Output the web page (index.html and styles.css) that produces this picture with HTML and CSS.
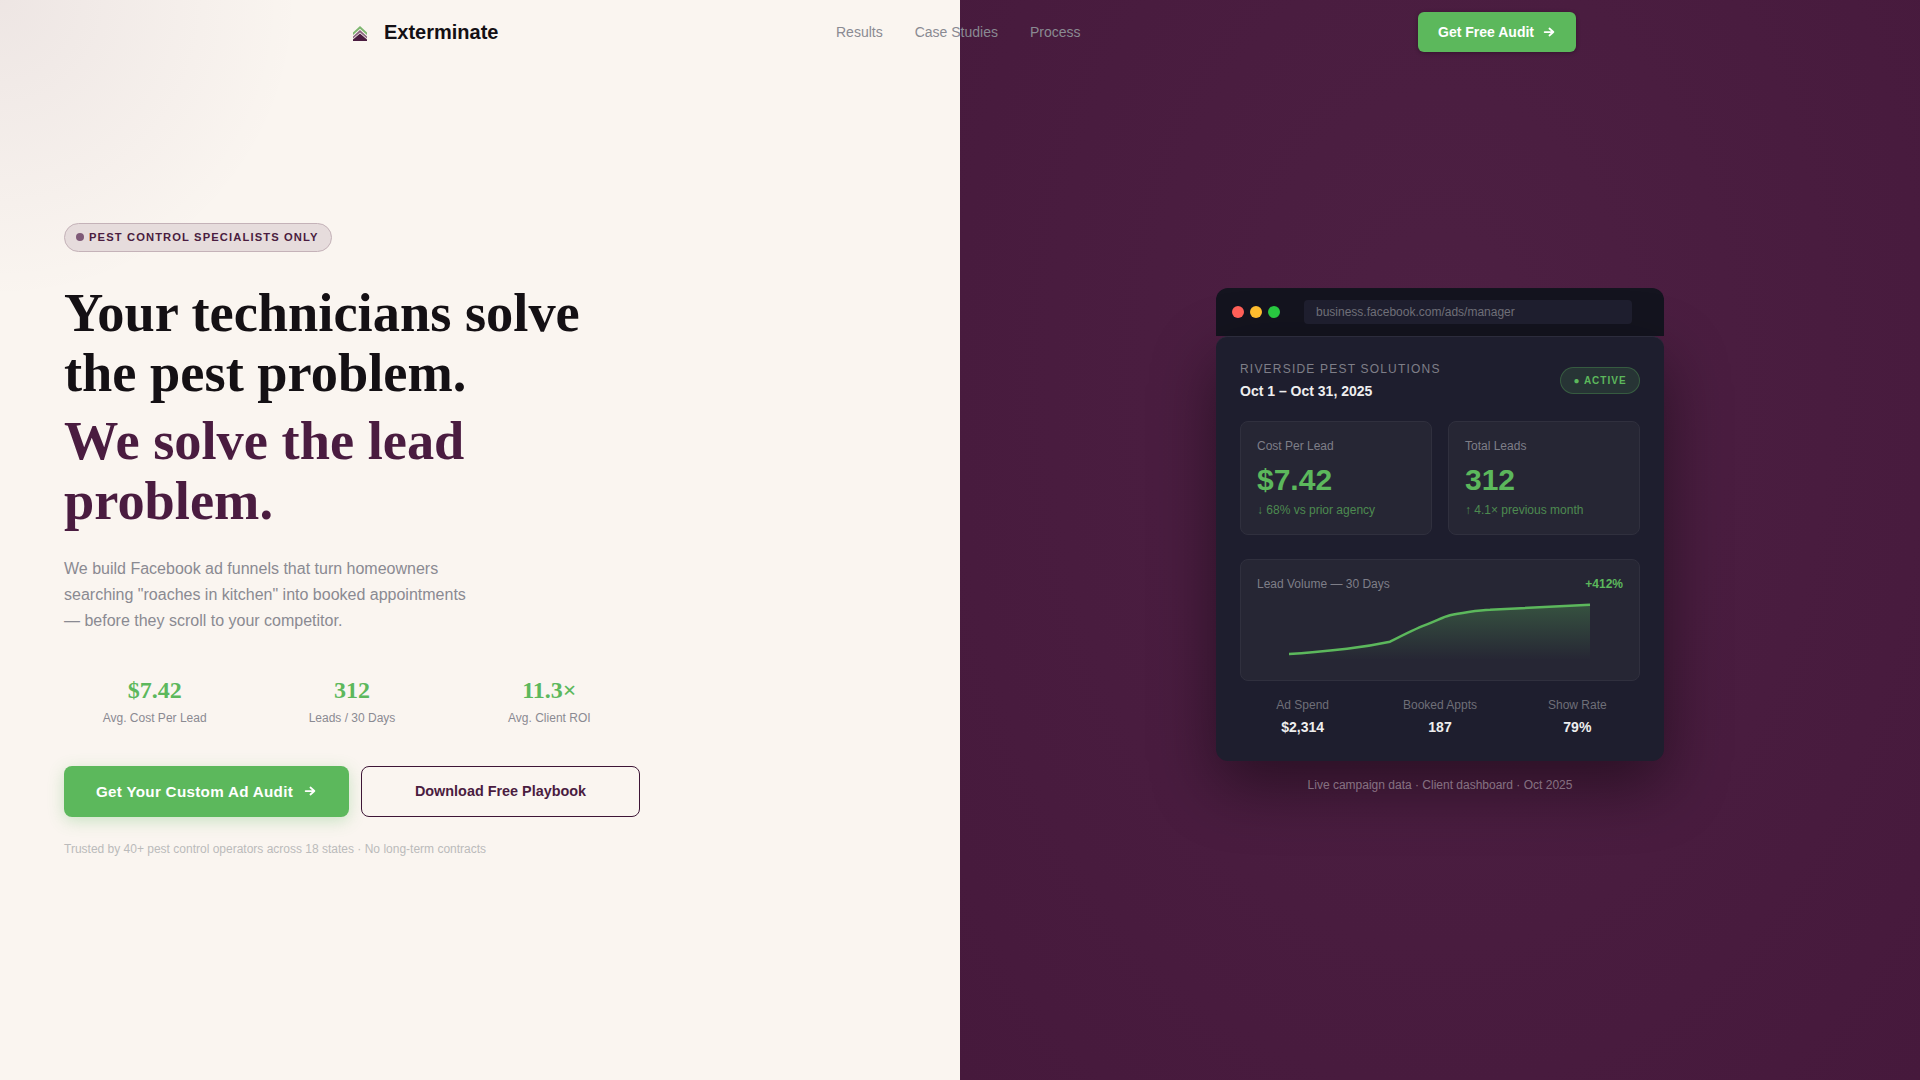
FILE: index.html
```html
<!DOCTYPE html>
<html lang="en">
<head>
    <meta charset="UTF-8">
    <meta name="viewport" content="width=device-width, initial-scale=1.0">
    <title>Exterminate - Facebook Ads for Pest Control</title>
    <link rel="stylesheet" href="styles.css">
</head>
<body>
<header class="nav">
    <div class="nav-inner">
        <a class="logo" href="#">
            <svg class="logo-icon" viewBox="0 0 32 32" aria-hidden="true">
                <path d="M16 10 L23 16.5 V19 L16 12.8 L9 19 V16.5 Z" fill="#7db66f"/>
                <path d="M16 14 L23 20.5 V22.5 L16 16.5 L9 22.5 V20.5 Z" fill="#8a6480"/>
                <path d="M16 17.5 L23 23.5 V25 H9 V23.5 Z" fill="#4a1c40"/>
            </svg>
            <span class="logo-text">Exterminate</span>
        </a>
        <nav class="nav-links">
            <a href="#">Results</a>
            <a href="#">Case Studies</a>
            <a href="#">Process</a>
        </nav>
        <a class="nav-cta" href="#">Get Free Audit
            <svg class="arrow" viewBox="0 0 16 16" aria-hidden="true"><path d="M3 8h10M8.5 4 13 8l-4.5 4"/></svg>
        </a>
    </div>
</header>

<main class="split">
    <section class="hero">
        <div class="hero-inner">
            <div class="badge"><span class="badge-dot"></span>PEST CONTROL SPECIALISTS ONLY</div>
            <h1>Your technicians solve the pest problem.<span class="h1-accent">We solve the lead problem.</span></h1>
            <p class="lead">We build Facebook ad funnels that turn homeowners searching "roaches in kitchen" into booked appointments — before they scroll to your competitor.</p>
            <div class="stats">
                <div class="stat"><div class="stat-value">$7.42</div><div class="stat-label">Avg. Cost Per Lead</div></div>
                <div class="stat"><div class="stat-value">312</div><div class="stat-label">Leads / 30 Days</div></div>
                <div class="stat"><div class="stat-value">11.3×</div><div class="stat-label">Avg. Client ROI</div></div>
            </div>
            <div class="actions">
                <a class="btn btn-primary" href="#">Get Your Custom Ad Audit
                    <svg class="arrow" viewBox="0 0 16 16" aria-hidden="true"><path d="M3 8h10M8.5 4 13 8l-4.5 4"/></svg>
                </a>
                <a class="btn btn-outline" href="#">Download Free Playbook</a>
            </div>
            <p class="trust">Trusted by 40+ pest control operators across 18 states · No long-term contracts</p>
        </div>
    </section>

    <section class="showcase">
        <div class="browser">
            <div class="browser-bar">
                <div class="dots">
                    <span class="dot dot-red"></span>
                    <span class="dot dot-yellow"></span>
                    <span class="dot dot-green"></span>
                </div>
                <div class="url">business.facebook.com/ads/manager</div>
            </div>
            <div class="dash">
                <div class="dash-head">
                    <div>
                        <div class="client">RIVERSIDE PEST SOLUTIONS</div>
                        <div class="period">Oct 1 – Oct 31, 2025</div>
                    </div>
                    <div class="status">● ACTIVE</div>
                </div>
                <div class="metrics">
                    <div class="metric">
                        <div class="metric-label">Cost Per Lead</div>
                        <div class="metric-value">$7.42</div>
                        <div class="metric-sub">↓ 68% vs prior agency</div>
                    </div>
                    <div class="metric">
                        <div class="metric-label">Total Leads</div>
                        <div class="metric-value">312</div>
                        <div class="metric-sub">↑ 4.1× previous month</div>
                    </div>
                </div>
                <div class="chart">
                    <div class="chart-head">
                        <span>Lead Volume — 30 Days</span>
                        <span class="chart-delta">+412%</span>
                    </div>
                    <svg class="chart-svg" viewBox="0 0 366 64" aria-hidden="true">
                        <defs>
                            <linearGradient id="chartFill" x1="0" y1="0" x2="0" y2="1">
                                <stop offset="0" stop-color="#5cb85c" stop-opacity="0.3"/>
                                <stop offset="1" stop-color="#5cb85c" stop-opacity="0"/>
                            </linearGradient>
                        </defs>
                        <path d="M32 54 C50 53 70 51 90 48.7 S120 44.5 133 41.7 C142 37 160 28 170 24.3 S186 17 193 15.3 S222 10 233 9.7 L333 4.7 V60 H32 Z" fill="url(#chartFill)"/>
                        <path d="M32 54 C50 53 70 51 90 48.7 S120 44.5 133 41.7 C142 37 160 28 170 24.3 S186 17 193 15.3 S222 10 233 9.7 L333 4.7" fill="none" stroke="#5cb85c" stroke-width="2.5" stroke-linejoin="round"/>
                    </svg>
                </div>
                <div class="totals">
                    <div class="total"><div class="total-label">Ad Spend</div><div class="total-value">$2,314</div></div>
                    <div class="total"><div class="total-label">Booked Appts</div><div class="total-value">187</div></div>
                    <div class="total"><div class="total-label">Show Rate</div><div class="total-value">79%</div></div>
                </div>
            </div>
            <p class="caption">Live campaign data · Client dashboard · Oct 2025</p>
        </div>
    </section>
</main>
</body>
</html>
```

FILE: styles.css
```css
* {
    box-sizing: border-box;
}

body {
    margin: 0;
    font-family: "Liberation Sans", Arial, sans-serif;
    color: #141014;
    background: #faf5f0;
}

a {
    text-decoration: none;
    color: inherit;
}

.arrow {
    width: 14px;
    height: 14px;
    fill: none;
    stroke: currentColor;
    stroke-width: 2;
    stroke-linecap: round;
    stroke-linejoin: round;
}

/* nav */
.nav {
    position: absolute;
    top: 0;
    left: 0;
    right: 0;
    z-index: 2;
}

.nav-inner {
    max-width: 1280px;
    height: 64px;
    margin: 0 auto;
    padding: 0 24px;
    display: flex;
    align-items: center;
    justify-content: space-between;
}

.logo {
    display: flex;
    align-items: center;
    gap: 8px;
}

.logo-icon {
    width: 32px;
    height: 32px;
}

.logo-text {
    font-size: 20px;
    font-weight: 700;
    color: #141014;
}

.nav-links {
    display: flex;
    gap: 32px;
    font-size: 14px;
    color: #8a8a92;
}

.nav-cta {
    display: flex;
    align-items: center;
    gap: 8px;
    height: 40px;
    padding: 0 20px;
    font-size: 14px;
    font-weight: 700;
    color: #fff;
    background: #5cb85c;
    border-radius: 6px;
    box-shadow: 0 1px 4px rgba(0, 0, 0, 0.3);
}

/* split */
.split {
    display: grid;
    grid-template-columns: 1fr 1fr;
    min-height: 1080px;
}

.hero {
    display: flex;
    align-items: center;
    padding: 0 64px;
    background: radial-gradient(circle at 0 0, rgba(74, 28, 64, 0.07), rgba(74, 28, 64, 0) 300px), #faf5f0;
}

.hero-inner {
    width: 576px;
}

.badge {
    display: inline-flex;
    align-items: center;
    gap: 5px;
    height: 29px;
    padding: 0 12px 0 11px;
    font-size: 11.2px;
    font-weight: 700;
    letter-spacing: 1.12px;
    color: #4a1c40;
    background: #e6dcdc;
    border: 1px solid #c4b2b8;
    border-radius: 15px;
}

.badge-dot {
    width: 8px;
    height: 8px;
    border-radius: 50%;
    background: #7f5a78;
}

h1 {
    margin: 31px 0 0;
    font-family: "Liberation Serif", "Times New Roman", serif;
    font-size: 54.4px;
    font-weight: 700;
    line-height: 60.5px;
    color: #141014;
}

.h1-accent {
    display: block;
    margin-top: 7px;
    color: #4a1c40;
}

.lead {
    margin: 24px 0 0;
    max-width: 420px;
    font-size: 16px;
    line-height: 26px;
    color: #8a8a92;
}

.stats {
    display: grid;
    grid-template-columns: repeat(3, 1fr);
    gap: 16px;
    margin-top: 40px;
    text-align: center;
}

.stat-value {
    font-family: "Liberation Serif", "Times New Roman", serif;
    font-size: 24px;
    font-weight: 700;
    line-height: 32px;
    color: #5cb85c;
}

.stat-label {
    margin-top: 4px;
    font-size: 12px;
    line-height: 16px;
    color: #8a8a92;
}

.actions {
    display: flex;
    gap: 12px;
    margin-top: 40px;
}

.btn {
    display: flex;
    align-items: center;
    justify-content: center;
    height: 51px;
    font-weight: 700;
    border-radius: 8px;
}

.btn-primary {
    gap: 10px;
    width: 285px;
    font-size: 15.2px;
    letter-spacing: 0.3px;
    color: #fff;
    background: #5cb85c;
    box-shadow: 0 4px 16px rgba(92, 184, 92, 0.3);
}

.btn-outline {
    flex: 1;
    font-size: 14.4px;
    color: #4a1c40;
    border: 1.5px solid #3d1636;
}

.trust {
    margin: 24px 0 1px;
    font-size: 12px;
    line-height: 16px;
    color: #bbb;
}

/* right panel */
.showcase {
    display: flex;
    align-items: center;
    justify-content: center;
    background: radial-gradient(ellipse at 50% 35%, #4d2043, #46193c);
}

.browser {
    width: 448px;
}

.browser-bar {
    display: flex;
    align-items: center;
    gap: 24px;
    height: 48px;
    padding: 0 32px 0 16px;
    background: #14141f;
    border-radius: 12px 12px 0 0;
}

.dots {
    display: flex;
    gap: 6px;
}

.dot {
    width: 12px;
    height: 12px;
    border-radius: 50%;
}

.dot-red {
    background: #ff5f57;
}

.dot-yellow {
    background: #febc2e;
}

.dot-green {
    background: #28c840;
}

.url {
    flex: 1;
    height: 24px;
    padding: 0 12px;
    font-size: 12px;
    line-height: 24px;
    color: #6f6f78;
    background: #1e1e2e;
    border-radius: 4px;
}

.dash {
    padding: 24px;
    background: #1e1e2e;
    border-top: 1px solid #2c2c3c;
    border-radius: 12px;
    box-shadow: 0 24px 64px rgba(0, 0, 0, 0.45);
}

.dash-head {
    display: flex;
    align-items: center;
    justify-content: space-between;
}

.client {
    font-size: 12px;
    line-height: 16px;
    letter-spacing: 1.2px;
    color: #7e7e88;
}

.period {
    margin-top: 4px;
    font-size: 14px;
    font-weight: 700;
    line-height: 20px;
    color: #eee;
}

.status {
    height: 27px;
    width: 80px;
    font-size: 10px;
    font-weight: 700;
    line-height: 25px;
    text-align: center;
    letter-spacing: 1px;
    color: #5cb85c;
    background: rgba(92, 184, 92, 0.15);
    border: 1px solid rgba(92, 184, 92, 0.3);
    border-radius: 14px;
}

.metrics {
    display: grid;
    grid-template-columns: 1fr 1fr;
    gap: 16px;
    margin-top: 20px;
}

.metric {
    height: 114px;
    padding: 16px;
    background: #262634;
    border: 1px solid #30303e;
    border-radius: 8px;
}

.metric-label {
    font-size: 12px;
    line-height: 16px;
    color: #7e7e88;
}

.metric-value {
    margin-top: 8px;
    font-size: 30px;
    font-weight: 700;
    line-height: 36px;
    color: #5cb85c;
}

.metric-sub {
    margin-top: 4px;
    font-size: 12px;
    line-height: 16px;
    color: #4d8a50;
}

.chart {
    margin-top: 24px;
    padding: 16px;
    height: 122px;
    background: #262634;
    border: 1px solid #30303e;
    border-radius: 8px;
}

.chart-head {
    display: flex;
    justify-content: space-between;
    font-size: 12px;
    line-height: 16px;
    color: #7e7e88;
}

.chart-delta {
    font-weight: 700;
    color: #5cb85c;
}

.chart-svg {
    display: block;
    width: 366px;
    height: 64px;
    margin-top: 8px;
}

.totals {
    display: grid;
    grid-template-columns: repeat(3, 1fr);
    gap: 12px;
    margin-top: 16px;
    text-align: center;
}

.total-label {
    font-size: 12px;
    line-height: 16px;
    color: #6f6f78;
}

.total-value {
    margin-top: 4px;
    font-size: 14px;
    font-weight: 700;
    line-height: 20px;
    color: #eee;
}

.caption {
    margin: 16px 0 0;
    font-size: 12px;
    line-height: 16px;
    text-align: center;
    color: rgba(255, 255, 255, 0.4);
}
```
